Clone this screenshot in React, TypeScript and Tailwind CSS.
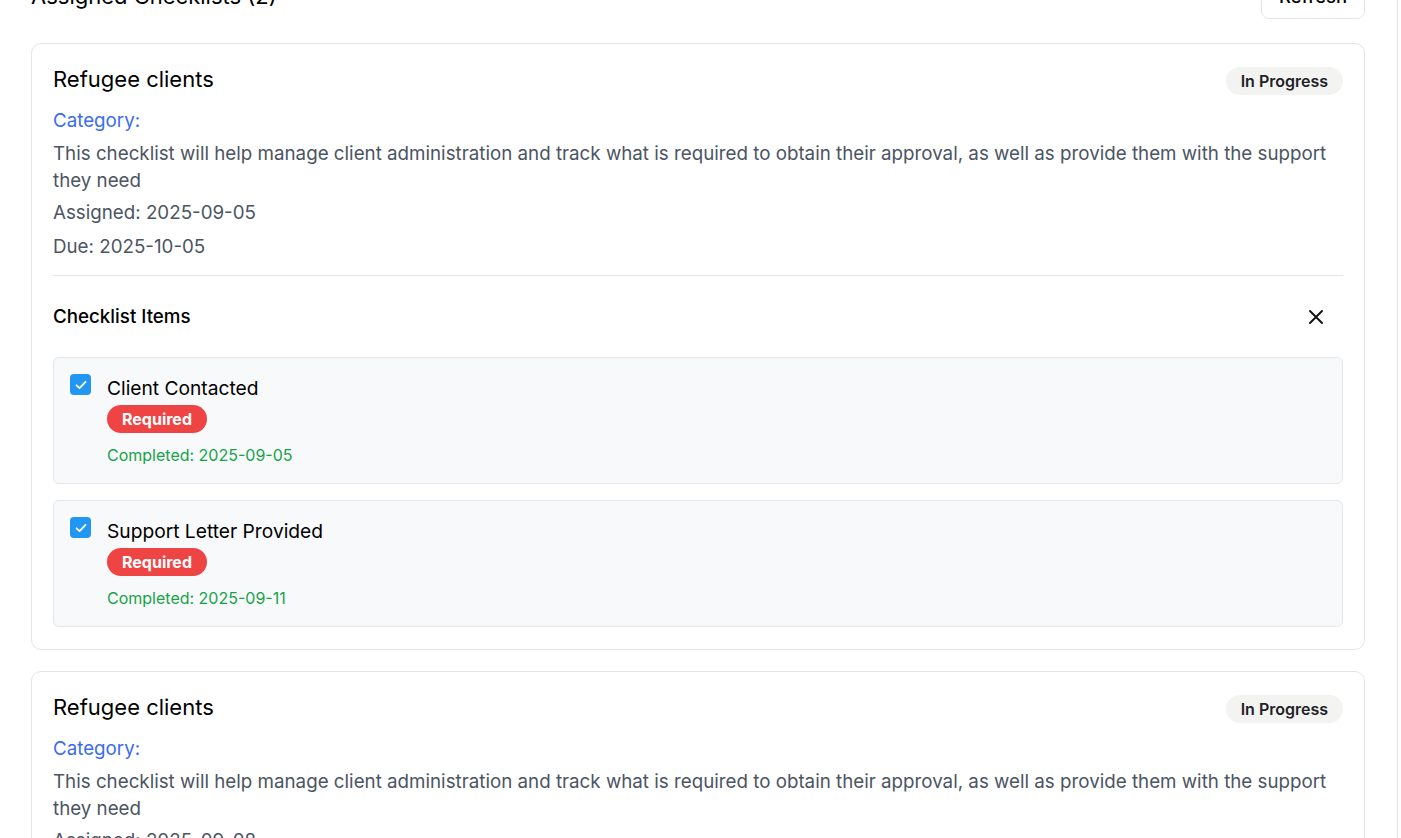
import React from "react";

const font = { fontFamily: "Inter, 'Noto Sans', sans-serif" };

function CheckIcon() {
  return (
    <span className="mt-[-2px] flex h-[21px] w-[21px] shrink-0 items-center justify-center rounded-[4px] bg-[#2196f3]">
      <svg width="14" height="14" viewBox="0 0 14 14" fill="none">
        <polyline points="2.5,7.3 5.6,10.2 11.5,3.8" stroke="white" strokeWidth="1.8" strokeLinecap="round" strokeLinejoin="round" />
      </svg>
    </span>
  );
}

function Item({ title, date }: { title: string; date: string }) {
  return (
    <div className="flex gap-4 rounded-[6px] border border-[#e5e7eb] bg-[#f8f9fa] pb-[17px] pl-4 pr-4 pt-[18px]">
      <CheckIcon />
      <div className="flex flex-col items-start">
        <div className="text-[19.2px] leading-6 text-black">{title}</div>
        <span className="mt-[5px] flex h-[28px] items-center rounded-full bg-[#ef4444] px-[15px] text-[16px] font-bold text-white">
          Required
        </span>
        <div className="mt-[11px] text-[16px] leading-[22px] text-[#16a34a]">Completed: {date}</div>
      </div>
    </div>
  );
}

function Card({ assigned, due, expanded }: { assigned: string; due: string; expanded: boolean }) {
  return (
    <div className="rounded-[10px] border border-[#e5e5e5] bg-white px-[21px] pb-[22px] pt-[21px]">
      <div className="flex items-start justify-between">
        <h3 className="text-[22px] font-normal leading-7 text-black">Refugee clients</h3>
        <span className="mt-[2px] flex h-[28px] items-center rounded-full bg-[#f3f3f1] px-[15px] text-[16px] font-semibold text-[#1f2328]">
          In Progress
        </span>
      </div>
      <div className="mt-[12px] text-[18.75px] leading-[27px] text-[#3b6cf0]">Category:</div>
      <p className="mt-[6px] text-[18.75px] leading-[27px] text-[#4b5563]">
        This checklist will help manage client administration and track what is required to obtain their approval, as well as provide them with the support they need
      </p>
      <div className="mt-[5px] text-[18.75px] leading-[27px] text-[#4b5563]">Assigned: {assigned}</div>
      <div className="mt-[7px] text-[18.75px] leading-[27px] text-[#4b5563]">Due: {due}</div>
      {expanded && (
        <div className="mt-[15px] border-t border-[#e5e5e5] pt-[21px]">
          <div className="mb-[20px] flex h-10 items-center justify-between">
            <span className="text-[18.75px] font-medium text-black">Checklist Items</span>
            <button className="mr-[7px] flex h-10 w-10 items-center justify-center">
              <svg width="14" height="14" viewBox="0 0 14 14" fill="none">
                <path d="M1 1L13 13M13 1L1 13" stroke="#111" strokeWidth="1.9" strokeLinecap="round" />
              </svg>
            </button>
          </div>
          <div className="flex flex-col gap-4">
            <Item title="Client Contacted" date="2025-09-05" />
            <Item title="Support Letter Provided" date="2025-09-11" />
          </div>
        </div>
      )}
    </div>
  );
}

export default function App() {
  return (
    <div className="h-[838px] overflow-hidden bg-white" style={font}>
      <div className="flex h-full w-[1398px] flex-col border-r border-[#e5e5e5] pl-[31px] pr-[32px]">
        <div className="-mt-[27px] mb-6 flex items-center justify-between">
          <h2 className="text-[22px] font-normal leading-7 text-black">Assigned Checklists (2)</h2>
          <button className="rounded-lg border border-[#e5e5e5] bg-white px-[17px] py-[10px] text-[18.4px] font-medium leading-6 text-black">
            Refresh
          </button>
        </div>
        <div className="flex flex-col gap-[21px]">
          <Card assigned="2025-09-05" due="2025-10-05" expanded />
          <Card assigned="2025-09-08" due="2025-10-08" expanded={false} />
        </div>
      </div>
    </div>
  );
}
